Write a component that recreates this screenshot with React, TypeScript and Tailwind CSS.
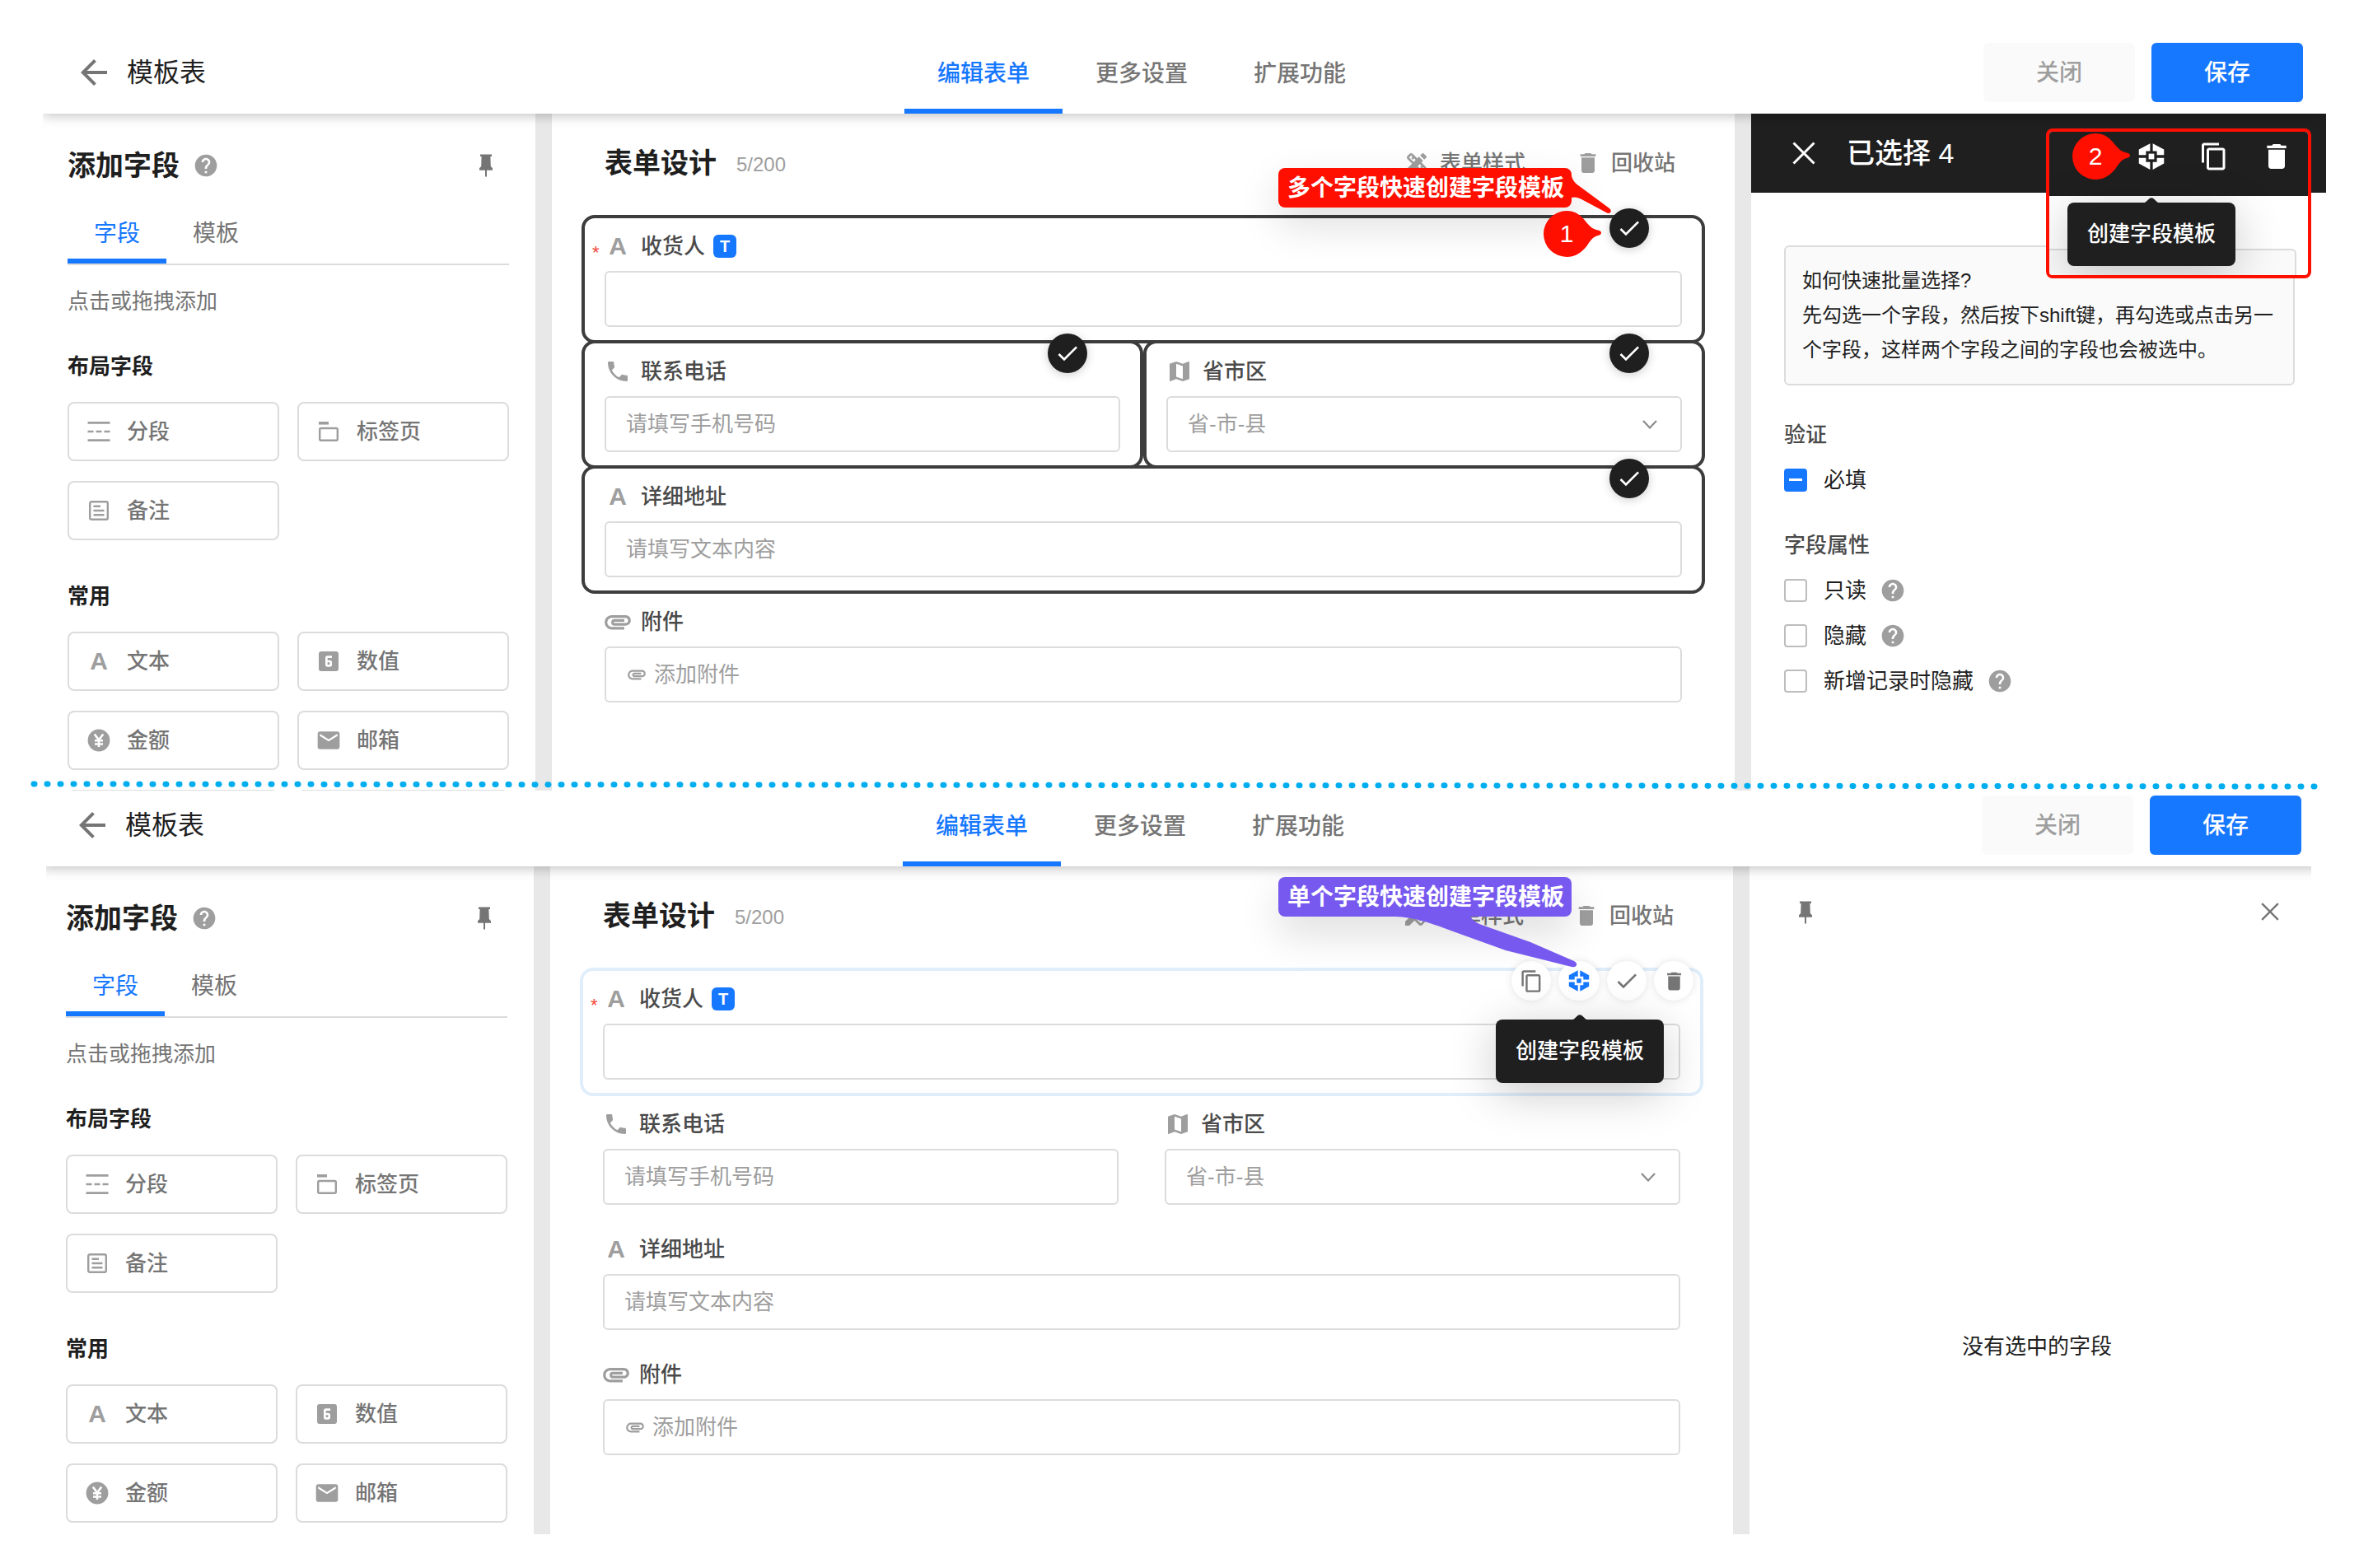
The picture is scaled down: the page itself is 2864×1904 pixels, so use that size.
import type { ReactNode } from 'react'
import {
  MdArrowBack,
  MdAttachment,
  MdCheck,
  MdContentCopy,
  MdDelete,
  MdDesignServices,
  MdEmail,
  MdHelp,
  MdLooks6,
  MdMap,
  MdPhone,
} from 'react-icons/md'

function PinIcon() {
  return (
    <svg className="size-8 shrink-0" viewBox="0 0 32 32" fill="currentColor">
      <path d="M9 2.5h14V5h-1.6l.4 12 2.2 2.2v2.6h-7v7.7h-2v-7.7H8v-2.6L10.200 17l.4-12H9z" />
    </svg>
  )
}

function CloseIcon({ className }: { className: string }) {
  return (
    <svg className={className} viewBox="0 0 28 28" fill="none" stroke="currentColor" strokeWidth="3">
      <path d="M1.500 1.500l25 25M26.500 1.500l-25 25" />
    </svg>
  )
}

function CubeIcon({ className }: { className: string }) {
  return (
    <svg className={className} viewBox="-16 -16 32 32" fill="currentColor">
      <path d="M-1.300-12.700L-12.200-6.800V-1.400H-5.300V-5.300H-1.300z" />
      <path d="M1.300-12.700L12.200-6.800V-1.400H5.300V-5.300H1.300z" />
      <path d="M-1.300 12.700L-12.200 6.800V1.400H-5.300V5.300H-1.300z" />
      <path d="M1.300 12.700L12.200 6.800V1.400H5.300V5.300H1.300z" />
      <rect x="-2.700" y="-2.700" width="5.400" height="5.400" />
    </svg>
  )
}

function SectionIcon() {
  return (
    <svg className="size-8" viewBox="0 0 32 32" fill="none" stroke="currentColor" strokeWidth="2.700">
      <path d="M2.500 5.300h27M2.500 16h7M12.500 16h7M22.500 16h7M2.500 26.700h27" />
    </svg>
  )
}

function TabPageIcon() {
  return (
    <svg className="size-8" viewBox="0 0 32 32" fill="none" stroke="currentColor">
      <path d="M4 5.800h12" strokeWidth="3.600" />
      <rect x="5.200" y="12" width="21.600" height="14.700" rx="1.500" strokeWidth="2.400" />
    </svg>
  )
}

function NoteIcon() {
  return (
    <svg className="size-8" viewBox="0 0 32 32" fill="none" stroke="currentColor" strokeWidth="2.400">
      <rect x="5.200" y="5.200" width="21.600" height="21.600" rx="1.800" />
      <path d="M9.500 10.800h8.500M9.500 16h13M9.500 21.200h13" />
    </svg>
  )
}

function YenIcon() {
  return (
    <svg className="size-8" viewBox="0 0 32 32">
      <circle cx="16" cy="16" r="13.400" fill="currentColor" />
      <path d="M10.800 8.500L16 15.500l5.200-7M16 15v9M11 16.300h10M11 20.500h10" fill="none" stroke="#fff" strokeWidth="2.600" />
    </svg>
  )
}

function ChevronIcon() {
  return (
    <svg
      className="pointer-events-none absolute top-[29px] right-[30px] h-[11px] w-[18px] text-[#8c8c8c]"
      viewBox="0 0 18 11"
      fill="none"
      stroke="currentColor"
      strokeWidth="2.200"
    >
      <path d="M1 1l8 8.500L17 1" />
    </svg>
  )
}

function LetterIcon() {
  return <span className="text-[30px] leading-8 font-bold">A</span>
}

function Header({ title, className }: { title: string; className: string }) {
  return (
    <header
      className={`relative z-10 grid h-[92px] grid-cols-[1046fr_auto_1150fr] items-end bg-white shadow-[0_2px_14px_rgba(0,0,0,0.26)] ${className}`}
    >
      <div className="mb-[14px] flex h-[72px] items-center gap-4 pl-[38px]">
        <button type="button" aria-label="返回" className="text-[#757575]">
          <MdArrowBack className="size-12" />
        </button>
        <h1 className="text-[32px] leading-[46px] text-[#1f1f1f]">{title}</h1>
      </div>
      <nav className="flex h-[92px] text-[28px] font-medium text-[#757575]">
        <a href="#edit" className="border-b-[6px] border-[#1677ff] px-10 pt-6 leading-10 text-[#1677ff]">
          编辑表单
        </a>
        <a href="#more" className="px-10 pt-6 leading-10">
          更多设置
        </a>
        <a href="#extend" className="px-10 pt-6 leading-10">
          扩展功能
        </a>
      </nav>
      <div className="mb-[14px] flex justify-end gap-5 pr-7 text-[28px] font-medium">
        <button type="button" className="h-[72px] w-[184px] rounded-md bg-[#fafafa] pt-[2px] text-[#9e9e9e]">
          关闭
        </button>
        <button type="button" className="h-[72px] w-[184px] rounded-md bg-[#1677ff] pt-[2px] text-white">
          保存
        </button>
      </div>
    </header>
  )
}

function FieldButton({ icon, children }: { icon: ReactNode; children: ReactNode }) {
  return (
    <button
      type="button"
      className="flex h-[72px] items-center gap-[18px] rounded-lg border-2 border-[#dcdcdc] pl-5 text-[26px] font-medium text-[#757575]"
    >
      <span className="flex size-8 items-center justify-center text-[#9e9e9e]">{icon}</span>
      {children}
    </button>
  )
}

function Sidebar() {
  return (
    <aside className="w-[598px] shrink-0 pt-10 pr-8 pl-[30px]">
      <div className="flex h-[46px] items-center">
        <h2 className="text-[34px] leading-[46px] font-bold text-[#1f1f1f]">添加字段</h2>
        <MdHelp className="ml-4 size-8 text-[#9e9e9e]" />
        <button type="button" aria-label="固定" className="mr-3 ml-auto text-[#757575]">
          <PinIcon />
        </button>
      </div>
      <nav className="mt-[22px] flex border-b-2 border-[#dcdcdc] text-[28px] text-[#757575]">
        <a href="#fields" className="h-[74px] border-b-[6px] border-[#1677ff] px-8 pt-[18px] leading-10 text-[#1677ff]">
          字段
        </a>
        <a href="#templates" className="h-[74px] px-8 pt-[18px] leading-10">
          模板
        </a>
      </nav>
      <p className="mt-[26px] text-[26px] leading-9 text-[#757575]">点击或拖拽添加</p>

      <h3 className="mt-[43px] text-[26px] leading-9 font-bold text-[#1f1f1f]">布局字段</h3>
      <div className="mt-[25px] grid grid-cols-2 gap-x-[22px] gap-y-6">
        <FieldButton icon={<SectionIcon />}>分段</FieldButton>
        <FieldButton icon={<TabPageIcon />}>标签页</FieldButton>
        <FieldButton icon={<NoteIcon />}>备注</FieldButton>
      </div>

      <h3 className="mt-[50px] text-[26px] leading-9 font-bold text-[#1f1f1f]">常用</h3>
      <div className="mt-[25px] grid grid-cols-2 gap-x-[22px] gap-y-6">
        <FieldButton icon={<LetterIcon />}>文本</FieldButton>
        <FieldButton icon={<MdLooks6 className="size-8" />}>数值</FieldButton>
        <FieldButton icon={<YenIcon />}>金额</FieldButton>
        <FieldButton icon={<MdEmail className="size-8" />}>邮箱</FieldButton>
        <div className="h-[72px] rounded-lg border-2 border-[#dcdcdc]" />
        <div className="h-[72px] rounded-lg border-2 border-[#dcdcdc]" />
      </div>
    </aside>
  )
}

type FieldProps = {
  id: string
  label: string
  icon: ReactNode
  state?: 'selected' | 'hover'
  wide?: boolean
  required?: boolean
  overlay?: ReactNode
  children: ReactNode
}

const cardBorder = {
  none: 'border-transparent',
  selected: 'border-[#3d3d3d]',
  hover: 'border-[#e0eefc]',
}

function Field({ id, label, icon, state, wide, required, overlay, children }: FieldProps) {
  return (
    <div
      className={`relative -mb-1 rounded-2xl border-4 px-6 py-4 ${cardBorder[state ?? 'none']} ${wide ? 'col-span-2' : ''}`}
    >
      {required && <span className="absolute top-[30px] left-[9px] text-[22px] leading-6 text-[#f44336]">*</span>}
      <div className="flex h-9 items-center">
        <span className="flex size-8 items-center justify-center text-[#9e9e9e]">{icon}</span>
        <label htmlFor={id} className="ml-3 text-[26px] leading-9 font-medium text-[#4a4a4a]">
          {label}
        </label>
        {required && (
          <span className="ml-[10px] flex size-7 items-center justify-center rounded-md bg-[#1677ff] text-[20px] leading-7 font-bold text-white">
            T
          </span>
        )}
      </div>
      <div className="relative mt-3">{children}</div>
      {state === 'selected' && (
        <button
          type="button"
          aria-label={`取消选择${label}`}
          className="absolute -top-3 right-16 z-10 flex size-12 items-center justify-center rounded-full bg-[#1f1f1f] text-white shadow-[0_2px_12px_rgba(0,0,0,0.2)]"
        >
          <MdCheck className="size-8" />
        </button>
      )}
      {overlay}
    </div>
  )
}

const inputClass =
  'block h-[68px] w-full rounded-md border-2 border-[#dcdcdc] bg-transparent px-6 text-[26px] text-[#9e9e9e] placeholder:text-[#9e9e9e]'

type DesignerProps = {
  prefix: string
  selected?: boolean
  overlay?: ReactNode
  children: ReactNode
}

function Designer({ prefix, selected, overlay, children }: DesignerProps) {
  const state = selected ? 'selected' : undefined
  return (
    <main className="relative flex-1 border-x-[20px] border-[#e8e8e8] px-9 pt-[37px]">
      <div className="flex h-[46px] items-center pr-9 pl-7">
        <h2 className="text-[34px] leading-[46px] font-bold text-[#1f1f1f]">表单设计</h2>
        <span className="mt-1 ml-6 text-2xl text-[#9e9e9e]">5/200</span>
        <button type="button" className="ml-auto flex items-center gap-3 text-[26px] font-medium text-[#757575]">
          <MdDesignServices className="size-8 text-[#9e9e9e]" />
          表单样式
        </button>
        <button type="button" className="ml-[60px] flex items-center gap-3 text-[26px] font-medium text-[#757575]">
          <MdDelete className="size-8 text-[#9e9e9e]" />
          回收站
        </button>
      </div>
      <form className="mt-10 grid grid-cols-2">
        <Field id={`${prefix}-name`} label="收货人" icon={<LetterIcon />} state={state ?? 'hover'} wide required overlay={overlay}>
          <input id={`${prefix}-name`} className={inputClass} />
        </Field>
        <Field id={`${prefix}-phone`} label="联系电话" icon={<MdPhone className="size-8" />} state={state}>
          <input id={`${prefix}-phone`} placeholder="请填写手机号码" className={inputClass} />
        </Field>
        <Field id={`${prefix}-area`} label="省市区" icon={<MdMap className="size-8" />} state={state}>
          <select id={`${prefix}-area`} className={`appearance-none ${inputClass}`}>
            <option>省-市-县</option>
          </select>
          <ChevronIcon />
        </Field>
        <Field id={`${prefix}-address`} label="详细地址" icon={<LetterIcon />} state={state} wide>
          <input id={`${prefix}-address`} placeholder="请填写文本内容" className={inputClass} />
        </Field>
        <Field id={`${prefix}-file`} label="附件" icon={<MdAttachment className="size-[38px] shrink-0" />} wide>
          <button id={`${prefix}-file`} type="button" className={inputClass}>
            <span className="flex items-center gap-2">
              <MdAttachment className="size-[26px]" />
              添加附件
            </span>
          </button>
        </Field>
      </form>
      {children}
    </main>
  )
}

function Tooltip({ children }: { children: ReactNode }) {
  return (
    <div
      role="tooltip"
      className="relative flex h-[77px] w-[204px] items-center justify-center rounded-lg bg-[#1f1f1f] text-[26px] font-medium text-white shadow-[0_12px_56px_rgba(0,0,0,0.22)]"
    >
      <svg className="absolute -top-[6px] left-[92px] h-[7px] w-5" viewBox="0 0 20 7" fill="#1f1f1f">
        <path d="M0 7Q3 6 6 2.500Q10-2 14 2.500Q17 6 20 7z" />
      </svg>
      {children}
    </div>
  )
}

function StepMarker({ children }: { children: ReactNode }) {
  return (
    <div className="relative h-14 w-[70px] shrink-0">
      <svg className="absolute inset-0" viewBox="0 0 70 56" fill="#ff0f00">
        <path d="M28 0C39 0 46 6 52 14C57 20 60 22 66 23.500Q70 24.500 70 26.800Q70 29 66 30C60 31.500 57 36 53 42C47 50 39 56 28 56A28 28 0 0 1 28 0z" />
      </svg>
      <span className="relative block w-14 text-center text-[30px] leading-[56px] text-white">{children}</span>
    </div>
  )
}

function HoverActions() {
  const button = 'flex h-12 items-center justify-center rounded-full bg-white text-[#757575] shadow-[0_0_10px_rgba(0,0,0,0.12)]'
  return (
    <>
      <div className="absolute -top-3 right-2 flex gap-[9px]">
        <button type="button" aria-label="复制" className={`w-12 ${button}`}>
          <MdContentCopy className="size-[29px]" />
        </button>
        <button type="button" aria-label="创建字段模板" className={`w-[50px] ${button}`}>
          <CubeIcon className="size-8 text-[#1677ff]" />
        </button>
        <button type="button" aria-label="选择" className={`w-12 ${button}`}>
          <MdCheck className="size-8" />
        </button>
        <button type="button" aria-label="删除" className={`w-12 ${button}`}>
          <MdDelete className="size-[29px]" />
        </button>
      </div>
      <div className="absolute top-[59px] right-11 z-10">
        <Tooltip>创建字段模板</Tooltip>
      </div>
    </>
  )
}

function CheckOption({ id, label, mixed }: { id: string; label: string; mixed?: boolean }) {
  return (
    <div className="flex h-[55px] items-center">
      <input
        id={id}
        type="checkbox"
        defaultChecked={mixed}
        className="flex size-7 appearance-none items-center justify-center rounded-sm border-2 border-[#bdbdbd] checked:border-[#1677ff] checked:bg-[#1677ff] checked:before:block checked:before:h-[3px] checked:before:w-4 checked:before:bg-white checked:before:content-['']"
      />
      <label htmlFor={id} className="ml-5 text-[26px] leading-9 text-[#1f1f1f]">
        {label}
      </label>
      {!mixed && <MdHelp className="ml-4 size-8 text-[#9e9e9e]" />}
    </div>
  )
}

function BatchPanel() {
  return (
    <aside className="relative w-[698px] shrink-0">
      <div className="flex h-24 items-center bg-[#1f1f1f] pl-[50px] text-white">
        <button type="button" aria-label="取消选择">
          <CloseIcon className="size-7" />
        </button>
        <h2 className="ml-[38px] text-[34px] leading-[46px] font-medium">已选择 4</h2>
      </div>
      <div className="px-10 pt-16">
        <div className="w-[620px] rounded-md border-2 border-[#dcdcdc] bg-[#fafafa] p-5 text-2xl leading-[42px] text-[#1f1f1f]">
          <p>如何快速批量选择?</p>
          <p>先勾选一个字段，然后按下shift键，再勾选或点击另一个字段，这样两个字段之间的字段也会被选中。</p>
        </div>
        <h3 className="mt-[42px] text-[26px] leading-9 font-medium text-[#4a4a4a]">验证</h3>
        <div className="mt-[9px]">
          <CheckOption id="required" label="必填" mixed />
        </div>
        <h3 className="mt-[34px] text-[26px] leading-9 font-medium text-[#4a4a4a]">字段属性</h3>
        <div className="mt-[9px]">
          <CheckOption id="readonly" label="只读" />
          <CheckOption id="hidden" label="隐藏" />
          <CheckOption id="hidden-new" label="新增记录时隐藏" />
        </div>
      </div>

      {/* magnified toolbar */}
      <div className="absolute top-[18px] right-[18px] h-[182px] w-[322px] overflow-hidden rounded-lg border-4 border-[#ff0f00] bg-white">
        <div className="flex h-[78px] items-center bg-[#1f1f1f] pb-[18px] pl-7 text-white">
          <StepMarker>2</StepMarker>
          <button type="button" aria-label="创建字段模板" className="ml-[6px]">
            <CubeIcon className="size-10" />
          </button>
          <button type="button" aria-label="复制" className="ml-9 flex size-10 items-center justify-center">
            <MdContentCopy className="size-9" />
          </button>
          <button type="button" aria-label="删除" className="ml-9">
            <MdDelete className="size-10" />
          </button>
        </div>
        <div className="mt-16 mr-[14px] h-9 rounded-tr-md border-t-2 border-r-2 border-[#dcdcdc] bg-[#fafafa]" />
        <div className="absolute top-[86px] left-[22px]">
          <Tooltip>创建字段模板</Tooltip>
        </div>
      </div>
    </aside>
  )
}

function EmptyPanel() {
  return (
    <aside className="flex w-[698px] shrink-0 flex-col text-[#757575]">
      <div className="flex items-start justify-between pt-10 pr-[55px] pl-[52px]">
        <button type="button" aria-label="固定">
          <PinIcon />
        </button>
        <button type="button" aria-label="关闭面板" className="mt-1">
          <CloseIcon className="size-[22px]" />
        </button>
      </div>
      <p className="mt-[493px] text-center text-[26px] leading-9 text-[#1f1f1f]">没有选中的字段</p>
    </aside>
  )
}

const calloutClass =
  'relative h-12 w-[356px] rounded-lg pt-[2px] pl-[11px] text-[28px] leading-[46px] font-bold whitespace-nowrap text-white shadow-[0_20px_50px_rgba(0,0,0,0.14)]'

export default function App() {
  return (
    <div className="min-h-screen overflow-hidden bg-white pt-[46px] pb-10 font-['Liberation_Sans','Noto_Sans_CJK_SC',sans-serif]">
      <section className="pr-10 pl-[52px]">
        <Header title="模板表" className="[clip-path:inset(0_0_-24px_0)]" />
        <div className="flex h-[822px] overflow-hidden">
          <Sidebar />
          <Designer prefix="batch" selected>
            <div className="absolute top-[66px] right-[198px]">
              <div className={`${calloutClass} bg-[#ff0f00]`}>多个字段快速创建字段模板</div>
              <svg className="absolute top-0 left-[350px] h-[60px] w-[56px]" viewBox="0 0 56 60" fill="#ff0f00">
                <path d="M0 4L6 10Q8 17 14 21L52 49Q55 52 53 54Q51 56 48 54L20 39Q12 34 6 36L0 40z" />
              </svg>
            </div>
            <div className="absolute top-[118px] right-[162px]">
              <StepMarker>1</StepMarker>
            </div>
          </Designer>
          <BatchPanel />
        </div>
      </section>

      <section className="relative pr-[42px] pl-[50px]">
        <svg className="absolute -top-3 right-[50px] left-[37px] z-20 h-[11px] w-[calc(100%-87px)]">
          <line x1="4" y1="4" x2="100%" y2="7" stroke="#00aeef" strokeWidth="7" strokeLinecap="round" strokeDasharray="1 15" />
        </svg>
        <Header title="模板表" className="[clip-path:inset(0_16px_-24px_6px)]" />
        <div className="flex h-[811px] overflow-hidden">
          <Sidebar />
          <Designer prefix="single" overlay={<HoverActions />}>
            <div className="absolute top-[13px] right-[196px] z-10">
              <div className={`${calloutClass} bg-[#7759f0]`}>单个字段快速创建字段模板</div>
              <svg className="absolute top-[46px] left-[136px] h-[66px] w-[228px]" viewBox="0 0 228 66" fill="#7759f0">
                <path d="M0 0L6 2C30 3 46 9 68 17L140 43L220 63Q225 64 226 61Q227 58 223 56L170 33L108 11Q98 6 96 0z" />
              </svg>
            </div>
          </Designer>
          <EmptyPanel />
        </div>
      </section>
    </div>
  )
}
